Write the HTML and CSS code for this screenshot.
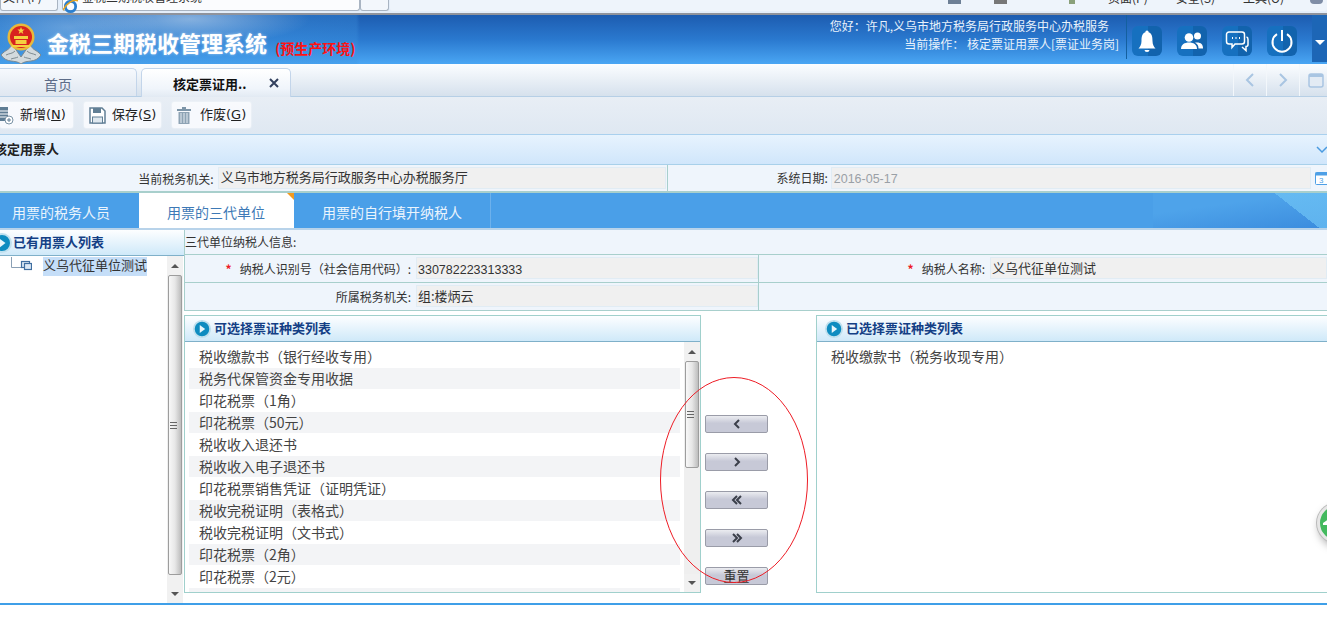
FILE: index.html
```html
<!DOCTYPE html>
<html lang="zh-CN">
<head>
<meta charset="utf-8">
<title>金税三期税收管理系统</title>
<link rel="stylesheet" href="styles.css">
</head>
<body>
<div class="app">
  <div class="chrome">
    <div class="ch-box ch-a"><span class="ch-text">文件(F)</span></div>
    <div class="ch-box ch-b">
      <svg class="ch-ie" width="15" height="15" viewBox="0 0 16 16"><circle cx="8" cy="8" r="5.500" fill="none" stroke="#2a7fd0" stroke-width="3"/><path d="M0 12C4 4 11 0 16 2" fill="none" stroke="#e8a520" stroke-width="1.500"/></svg>
      <span class="ch-text">金税三期税收管理系统</span>
    </div>
    <div class="ch-box ch-c"></div>
    <div class="ch-box ch-d">
      <i class="ch-ico ch-i1"></i><i class="ch-ico ch-i2"></i><i class="ch-ico ch-i3"></i>
      <span class="ch-text ch-m1">页面(P)</span><span class="ch-text ch-m2">安全(S)</span><span class="ch-text ch-m3">工具(O)</span>
      <i class="ch-ico ch-i4"></i>
    </div>
  </div>

  <header class="header">
    <svg class="emblem" width="40" height="42" viewBox="0 0 40 42">
      <path d="M0 33C5 27 8 29 11 22L20 35L29 22C32 29 35 27 40 33C34 42 26 37 20 42C14 37 6 42 0 33Z" fill="#d3dadd" stroke="#7d8a90" stroke-width="1"/>
      <path d="M5 33C9 31 11 32 14 29M35 33C31 31 29 32 26 29M10 37C13 36 15 36 17 35M30 37C27 36 25 36 23 35" fill="none" stroke="#7d8a90"/>
      <circle cx="20" cy="15" r="13.500" fill="#e9b93a"/>
      <circle cx="20" cy="15" r="11" fill="#d8221f"/>
      <path d="M20 5l1 2.600h2.600l-2.100 1.700.8 2.600-2.300-1.600-2.300 1.600.8-2.600-2.100-1.700H19z" fill="#f5d040"/>
      <rect x="13" y="14" width="14" height="3" fill="#f5d040"/>
      <rect x="14.500" y="18" width="11" height="4" fill="#f5d040"/>
      <rect x="11" y="23" width="18" height="2" fill="#f5d040"/>
    </svg>
    <span class="title">金税三期税收管理系统</span>
    <span class="env">(预生产环境)</span>
    <div class="user">
      <div class="user-hello">您好：许凡,义乌市地方税务局行政服务中心办税服务</div>
      <div class="user-op">当前操作： 核定票证用票人[票证业务岗]</div>
    </div>
    <div class="h-icons">
      <span class="h-icon"><svg width="30" height="30" viewBox="0 0 30 30"><path d="M15 4.500a1.600 1.600 0 0 1 1.600 1.800C20 7.500 20.500 11 20.500 15c0 3.500 1.500 6 3 7.500H6.500c1.500-1.500 3-4 3-7.500 0-4 .5-7.500 3.900-8.700A1.600 1.600 0 0 1 15 4.500z" fill="#fff"/><path d="M12.500 24h5a2.500 2 0 0 1-5 0z" fill="#fff"/></svg></span>
      <span class="h-icon"><svg width="30" height="30" viewBox="0 0 30 30"><circle cx="12" cy="11.500" r="4.300" fill="#fff"/><path d="M4 23c0-4.500 3.500-6.500 8-6.500s8 2 8 6.500z" fill="#fff"/><circle cx="20.500" cy="10" r="3.500" fill="#fff"/><path d="M21.500 22.500H26c0-4-2-6-6-6-.8 0-1.300.1-2 .3 2.500 1.200 3.500 3 3.500 5.700z" fill="#fff"/></svg></span>
      <span class="h-icon"><svg width="30" height="30" viewBox="0 0 30 30" fill="none" stroke="#fff" stroke-width="1.500"><path d="M7 6h13a2.500 2.500 0 0 1 2.500 2.500v7A2.500 2.500 0 0 1 20 18h-7l-3 3.500V18H7a2.500 2.500 0 0 1-2.500-2.500v-7A2.500 2.500 0 0 1 7 6z"/><path d="M24.500 11c1.500.3 1.500 1.500 1.500 2.500v5c0 1.500-1 2-2 2v4l-4-3.500" stroke-width="1.500"/><path d="M10 12h1M13.500 12h1M17 12h1" stroke-width="1.800"/></svg></span>
      <span class="h-icon"><svg width="30" height="30" viewBox="0 0 30 30" fill="none" stroke="#fff" stroke-width="2"><path d="M10 8.200a9.500 9.500 0 1 0 10 0"/><path d="M15 4v11"/></svg></span>
    </div>
    <div class="h-more"><i class="caret"></i></div>
  </header>

  <nav class="tabstrip">
    <div class="tab tab-home">首页</div>
    <div class="tab tab-active">
      <span class="tab-name">核定票证用..</span>
      <svg class="tab-x" width="10" height="10" viewBox="0 0 10 10"><path d="M1 1l8 8M9 1L1 9" stroke="#33415e" stroke-width="2"/></svg>
    </div>
    <div class="tab-nav">
      <span class="tab-nav-b"><svg width="10" height="14" viewBox="0 0 10 14"><path d="M8 1L2 7l6 6" fill="none" stroke="#a9c5e2" stroke-width="2"/></svg></span>
      <span class="tab-nav-b"><svg width="10" height="14" viewBox="0 0 10 14"><path d="M2 1l6 6-6 6" fill="none" stroke="#a9c5e2" stroke-width="2"/></svg></span>
      <span class="tab-nav-b tab-nav-last"><svg width="16" height="15" viewBox="0 0 16 15"><rect x="1" y="1" width="14" height="13" rx="2" fill="#e3ebf4" stroke="#a9c5e2" stroke-width="1.500"/><rect x="1" y="1" width="14" height="3" fill="#a9c5e2"/></svg></span>
    </div>
  </nav>

  <div class="toolbar">
    <button class="tool tool-new" type="button">
      <svg width="20" height="20" viewBox="0 0 20 20"><rect x="0" y="2" width="14" height="14" fill="#5f7d94"/><path d="M0 6h14M0 9h14M0 12h14" stroke="#fff"/><circle cx="15" cy="15" r="4" fill="#fff" stroke="#7b93a6"/><path d="M13 15h4M15 13v4" stroke="#5f7d94"/></svg>
      <span class="tool-t">新增(<u>N</u>)</span>
    </button>
    <button class="tool tool-save" type="button">
      <svg width="17" height="17" viewBox="0 0 17 17"><path d="M1 1h12l3 3v12H1z" fill="#fff" stroke="#617f95" stroke-width="1.500"/><rect x="4" y="1" width="8" height="5" fill="#617f95"/><rect x="3.500" y="10" width="10" height="6" fill="#dfe8ef" stroke="#617f95"/></svg>
      <span class="tool-t">保存(<u>S</u>)</span>
    </button>
    <button class="tool tool-del" type="button">
      <svg width="14" height="17" viewBox="0 0 14 17"><rect x="0" y="2" width="14" height="2" fill="#7d95a8"/><rect x="5" y="0" width="4" height="2" fill="#7d95a8"/><path d="M1.500 5h11v12h-11z" fill="#8ea3b4"/><path d="M4 6v10M7 6v10M10 6v10" stroke="#e6edf3"/></svg>
      <span class="tool-t">作废(<u>G</u>)</span>
    </button>
  </div>

  <div class="section">
    <span class="section-t">核定用票人</span>
    <svg class="section-c" width="12" height="8" viewBox="0 0 12 8"><path d="M1 1l5 5 5-5" fill="none" stroke="#4a9be0" stroke-width="1.500"/></svg>
  </div>

  <div class="frow">
    <label class="lab lab-org">当前税务机关:</label>
    <div class="inp inp-org">义乌市地方税务局行政服务中心办税服务厅</div>
    <label class="lab lab-date">系统日期:</label>
    <div class="inp inp-date">2016-05-17</div>
    <svg class="cal" width="12" height="14" viewBox="0 0 12 14"><rect x="0.500" y="1.500" width="14" height="12" rx="1" fill="#fff" stroke="#4d9fe6"/><rect x="0.500" y="1.500" width="14" height="3" fill="#4d9fe6"/><text x="4" y="12" class="cal-t">3</text></svg>
  </div>

  <div class="tabbar">
    <div class="bt bt-1">用票的税务人员</div>
    <div class="bt bt-2 bt-on">用票的三代单位<i class="corner"></i></div>
    <div class="bt bt-3">用票的自行填开纳税人</div>
    <div class="bt-deco"></div>
  </div>

  <main class="main">
    <aside class="side">
      <div class="ph">
        <svg class="ph-ico ph-ico-l" width="22" height="22" viewBox="0 0 22 22"><circle cx="11" cy="11" r="9" fill="#0e8cc0" stroke="#bfe0ee" stroke-width="2"/><path d="M8.500 6.500l6 4.500-6 4.500z" fill="#e8f6fb"/></svg>
        <span class="ph-t">已有用票人列表</span>
      </div>
      <div class="side-body">
        <div class="tree">
          <div class="tree-row">
            <svg class="tree-line" width="32" height="14" viewBox="0 0 32 14"><path d="M11.500 0v10.500H21" fill="none" stroke="#8aa0b5"/><rect x="21.500" y="4.500" width="8" height="6" fill="#dbe8f5" stroke="#3f6ea0" stroke-width="1.200"/><rect x="24.500" y="6.500" width="7" height="6" fill="#dbe8f5" stroke="#3f6ea0" stroke-width="1.200"/></svg>
            <span class="tree-t">义乌代征单位测试</span>
          </div>
        </div>
        <div class="sb sb-side">
          <span class="sb-btn"><i class="tri-up"></i></span>
          <span class="sb-thumb sb-thumb-side"><i class="grip"></i></span>
          <span class="sb-track"></span>
          <span class="sb-btn sb-down"><i class="tri-dn"></i></span>
        </div>
      </div>
    </aside>

    <section class="content">
      <div class="info-title">三代单位纳税人信息:</div>
      <div class="grid">
        <div class="gl"><em class="req">*</em>纳税人识别号（社会信用代码）:</div>
        <div class="gv"><span class="gi gi-num">330782223313333</span></div>
        <div class="gl"><em class="req">*</em>纳税人名称:</div>
        <div class="gv gv-last"><span class="gi">义乌代征单位测试</span></div>
        <div class="gl gl-b">所属税务机关:</div>
        <div class="gv gv-b"><span class="gi">组:楼炳云</span></div>
        <div class="gl gl-b"></div>
        <div class="gv gv-last gv-b gv-empty"></div>
      </div>

      <div class="transfer">
        <div class="panel">
          <div class="ph ph-p">
            <svg class="ph-ico" width="20" height="20" viewBox="0 0 22 22"><circle cx="11" cy="11" r="9" fill="#0e8cc0" stroke="#bfe0ee" stroke-width="2"/><path d="M8.500 6.500l6 4.500-6 4.500z" fill="#e8f6fb"/></svg>
            <span class="ph-t">可选择票证种类列表</span>
          </div>
          <div class="panel-body">
            <ul class="list">
              <li>税收缴款书（银行经收专用）</li>
              <li>税务代保管资金专用收据</li>
              <li>印花税票（1角）</li>
              <li>印花税票（50元）</li>
              <li>税收收入退还书</li>
              <li>税收收入电子退还书</li>
              <li>印花税票销售凭证（证明凭证）</li>
              <li>税收完税证明（表格式）</li>
              <li>税收完税证明（文书式）</li>
              <li>印花税票（2角）</li>
              <li>印花税票（2元）</li>
              <li class="li-cut"></li>
            </ul>
            <div class="sb sb-list">
              <span class="sb-btn"><i class="tri-up"></i></span>
              <span class="sb-thumb sb-thumb-list"><i class="grip"></i></span>
              <span class="sb-track"></span>
              <span class="sb-btn sb-down2"><i class="tri-dn"></i></span>
            </div>
          </div>
        </div>

        <div class="moves">
          <button class="mv" type="button"><svg width="10" height="10" viewBox="0 0 10 10"><path d="M7 1L3 5l4 4" fill="none" stroke="#3b3f4a" stroke-width="2"/></svg></button>
          <button class="mv" type="button"><svg width="10" height="10" viewBox="0 0 10 10"><path d="M3 1l4 4-4 4" fill="none" stroke="#3b3f4a" stroke-width="2"/></svg></button>
          <button class="mv" type="button"><svg width="12" height="10" viewBox="0 0 12 10"><path d="M6 1L2 5l4 4M10 1L6 5l4 4" fill="none" stroke="#3b3f4a" stroke-width="2"/></svg></button>
          <button class="mv" type="button"><svg width="12" height="10" viewBox="0 0 12 10"><path d="M2 1l4 4-4 4M6 1l4 4-4 4" fill="none" stroke="#3b3f4a" stroke-width="2"/></svg></button>
          <button class="mv mv-text" type="button">重置</button>
        </div>

        <div class="panel panel-r">
          <div class="ph ph-p">
            <svg class="ph-ico" width="20" height="20" viewBox="0 0 22 22"><circle cx="11" cy="11" r="9" fill="#0e8cc0" stroke="#bfe0ee" stroke-width="2"/><path d="M8.500 6.500l6 4.500-6 4.500z" fill="#e8f6fb"/></svg>
            <span class="ph-t">已选择票证种类列表</span>
          </div>
          <div class="panel-body">
            <ul class="list list-r"><li>税收缴款书（税务收现专用）</li></ul>
          </div>
        </div>
      </div>
    </section>
  </main>
  <div class="foot"></div>

  <svg class="mark" width="152" height="210" viewBox="0 0 152 210"><ellipse cx="75" cy="104" rx="73.500" ry="102.500" fill="none" stroke="#ee1c25" stroke-width="1"/></svg>
  <div class="float"><svg width="12" height="12" viewBox="0 0 12 12"><path d="M0 6l7-5v3h5v4H0z" fill="#fff"/></svg></div>
</div>
</body>
</html>
```

FILE: styles.css
```css
* { box-sizing: border-box; }
html, body { margin: 0; padding: 0; background: #fff; }
body { font-family: "Noto Sans CJK SC", "Liberation Sans", sans-serif; font-size: 13px; color: #333; overflow: hidden; }
.app { position: relative; width: 1327px; height: 617px; overflow: hidden; display: flex; flex-direction: column; background: #fff; }
button { font-family: inherit; }
ul { list-style: none; margin: 0; padding: 0; }

/* browser chrome */
.chrome { height: 15px; flex: none; display: flex; background: #e4eefa; border-bottom: 2px solid #8f939c; }
.ch-box { height: 11px; background: #f3f7fc; border: 1px solid #a9b4c2; border-top: 0; border-radius: 0 0 3px 3px; display: flex; align-items: flex-end; position: relative; }
.ch-a { width: 58px; overflow: hidden; }
.ch-b { width: 298px; margin-left: 4px; background: #fbfcfe; padding-left: 0; }
.ch-c { width: 29px; }
.ch-d { flex: 1; margin-left: 1px; background: #eef4fb; border: 0; overflow: hidden; }
.ch-text { font-size: 12px; line-height: 14px; height: 14px; color: #333; white-space: nowrap; margin-bottom: 6px; flex: none; }
.ch-a .ch-text { margin-left: 2px; }
.ch-ie { margin: 0 0 -4px 0; flex: none; align-self: flex-end; }
.ch-b .ch-text { margin-left: 4px; }
.ch-ico { width: 13px; height: 4px; background: #6d7f95; flex: none; align-self: flex-start; }
.ch-i1 { margin-left: 558px; }
.ch-i2 { margin-left: 33px; background: #777; }
.ch-i3 { margin-left: 62px; width: 6px; background: #8aa07a; }
.ch-m1 { margin-left: 33px; }
.ch-m2 { margin-left: 28px; }
.ch-m3 { margin-left: 28px; }
.ch-i4 { margin-left: 26px; border-radius: 0 0 7px 7px; background: #7f8da6; }

/* header */
.header {
  height: 49px; flex: none; display: flex; align-items: flex-start; color: #e9f2fb;
  background:
    radial-gradient(ellipse 120px 26px at 190px 4px, rgba(255,255,255,.42), transparent),
    radial-gradient(ellipse 90px 30px at 70px 12px, rgba(255,255,255,.25), transparent),
    linear-gradient(90deg, rgba(64,150,225,.55), rgba(64,150,225,.3) 356px, rgba(64,150,225,0) 360px),
    linear-gradient(180deg, #1d5cb0 0%, #2a79cf 50%, #4aa6f4 100%);
}
.emblem { flex: none; margin: 7px 0 0 1px; }
.title { font-size: 22px; font-weight: 700; line-height: 30px; margin: 12px 0 0 6px; color: #fff; text-shadow: 0 0 3px rgba(255,255,255,.5); white-space: nowrap; }
.env { font-size: 14px; font-weight: 700; color: #ff1212; line-height: 18px; margin: 24px 0 0 8px; white-space: nowrap; }
.user { margin-left: auto; font-size: 12px; line-height: 18px; text-align: right; padding-top: 2px; white-space: nowrap; }
.user-hello { padding-right: 10px; }
.user-op { padding-right: 0; }
.h-icons { width: 186px; height: 44px; margin-left: 7px; border-left: 1px solid #14609f; padding: 11px 0 0 5px; display: flex; gap: 15px; flex: none; }
.h-icon { width: 30px; height: 30px; border-radius: 6px; background: linear-gradient(90deg, #1670bf 55%, #1263ad 55%); display: block; }
.h-icon svg { display: block; }
.h-more { width: 15px; height: 47px; background: #1d66b6; flex: none; display: flex; align-items: center; justify-content: center; padding-top: 8px; }
.caret { width: 0; height: 0; border: 5px solid transparent; border-top: 5px solid #fff; border-bottom: 0; }

/* main tabs */
.tabstrip { height: 33px; flex: none; display: flex; align-items: flex-end; background: linear-gradient(180deg, #fbfdff, #d6e1ed); border-bottom: 1px solid #b6cfe6; position: relative; }
.tab { height: 28px; border: 1px solid #c3d5ea; border-bottom: 0; border-radius: 5px 5px 0 0; display: flex; align-items: center; }
.tab-home { width: 150px; margin-left: -13px; justify-content: center; padding-right: 8px; padding-top: 3px; color: #5c6c88; font-size: 14px; background: linear-gradient(180deg, #f6f9fd, #dfe7f1); }
.tab-active { width: 150px; margin-left: 4px; height: 29px; margin-bottom: -1px; background: linear-gradient(180deg, #fff, #f0f5fb 70%, #e2eaf3); padding: 0 11px 0 31px; justify-content: space-between; position: relative; }
.tab-name { font-size: 13px; font-weight: 700; color: #111; white-space: nowrap; }
.tab-nav { display: flex; height: 32px; margin-left: auto; align-self: flex-end; }
.tab-nav-b { width: 33px; border-left: 1px solid #f3f7fb; display: flex; align-items: center; justify-content: center; }
.tab-nav-last { width: 28px; justify-content: flex-start; padding-left: 8px; }

/* toolbar */
.toolbar { height: 37px; flex: none; display: flex; align-items: flex-start; gap: 11px; padding-top: 5px; background: linear-gradient(180deg, #e8eef5, #dfe8f2); }
.tool { height: 26px; border: 0; padding: 0; background: rgba(250,252,254,.85); box-shadow: 0 0 2px rgba(255,255,255,.9); border-radius: 2px; display: flex; align-items: center; color: #222; white-space: nowrap; }
.tool svg { flex: none; }
.tool-t { font-family: "DejaVu Sans", "Noto Sans CJK SC", sans-serif; font-size: 13px; padding-bottom: 4px; }
.tool-new { width: 73px; }
.tool-new svg { margin-left: -6px; }
.tool-new .tool-t { margin-left: 6px; }
.tool-save { width: 77px; padding-left: 5px; }
.tool-save .tool-t { margin-left: 6px; }
.tool-del { width: 79px; padding-left: 5px; }
.tool-del .tool-t { margin-left: 9px; }

/* section */
.section { height: 31px; flex: none; display: flex; align-items: center; justify-content: space-between; background: linear-gradient(180deg, #e7f3fe, #d0e6fb); border-top: 1px solid #a9d0ee; border-bottom: 1px solid #a8d0ea; }
.section-t { font-size: 13px; font-weight: 700; color: #222; margin-left: -6px; padding-bottom: 2px; white-space: nowrap; }
.section-c { margin-right: -1px; }

/* field row */
.frow { height: 28px; flex: none; display: flex; align-items: center; background: #eff5fc; border-bottom: 2px solid #a8cfcc; color: #333; }
.lab { font-size: 12px; text-align: right; white-space: nowrap; }
.lab-org { width: 214px; }
.inp { height: 22px; background: #f0f0f0; border: 1px solid #e1ecf4; line-height: 18px; white-space: nowrap; padding-left: 2px; }
.inp-org { width: 449px; margin-left: 4px; }
.lab-date { width: 161px; border-left: 1px solid #a8cfcc; height: 26px; line-height: 26px; margin-left: 1px; }
.inp-date { width: 481px; margin-left: 3px; color: #9aa0a6; font-size: 12.500px; line-height: 23px; font-family: "Liberation Sans", sans-serif; }
.cal { margin-left: 4px; flex: none; }
.cal-t { font-size: 8px; fill: #4d9fe6; font-family: "Liberation Sans", sans-serif; }

/* blue tab bar */
.tabbar { height: 37px; flex: none; display: flex; background: #4a9fe8; border-bottom: 2px solid #b8d3ea; }
.bt { height: 35px; line-height: 39px; font-size: 14px; color: #eaf4fd; white-space: nowrap; position: relative; }
.bt-1 { width: 139px; padding-left: 12px; }
.bt-2 { width: 155px; padding-left: 28px; }
.bt-3 { width: 197px; padding-left: 28px; border-right: 1px solid #6db1ec; }
.bt-on { background: #fff; color: #3d79b6; }
.corner { position: absolute; top: 0; right: 0; width: 0; height: 0; border-top: 7px solid #f39a1e; border-left: 7px solid transparent; }
.bt-deco { width: 174px; margin-left: auto; height: 35px; background:
  linear-gradient(38deg, transparent 76%, rgba(110,195,245,.7) 76%),
  linear-gradient(172deg, #4ea3ea 35%, #3b8cde 100%); }

/* main */
.main { height: 373px; flex: none; display: flex; }
.side { width: 184px; flex: none; display: flex; flex-direction: column; }
.ph { height: 26px; flex: none; display: flex; align-items: center; background: linear-gradient(180deg, #fdfeff, #cfe9f9); border-bottom: 1px solid #7fb0c9; }
.ph-t { font-size: 13px; font-weight: 700; color: #143f85; white-space: nowrap; padding-bottom: 2px; }
.ph-ico { flex: none; }
.ph-ico-l { margin-left: -9px; }
.side-body { flex: 1; display: flex; min-height: 0; padding-right: 1px; }
.tree { flex: 1; padding-top: 1px; min-width: 0; }
.tree-row { display: flex; align-items: flex-start; height: 19px; }
.tree-line { flex: none; margin-right: 11px; }
.tree-t { background: #c5def8; font-size: 13px; height: 19px; line-height: 16px; white-space: nowrap; color: #333; width: 104px; }

.sb { width: 16px; flex: none; background: #efefef; display: flex; flex-direction: column; align-items: stretch; }
.sb-btn { height: 19px; flex: none; display: flex; align-items: center; justify-content: center; background: #f1f1f1; }
.sb-thumb { flex: none; margin: 0 1px; border: 1px solid #9d9d9d; border-radius: 2px; background: linear-gradient(90deg, #f8f8f8, #e7e7e7 50%, #bdbdbd); display: flex; align-items: center; justify-content: center; }
.sb-thumb-side { height: 300px; }
.sb-thumb-list { height: 107px; }
.sb-track { flex: 1; }
.sb-down { height: 28px; padding-top: 10px; }
.sb-down2 { height: 18px; }
.grip { width: 7px; height: 7px; border-top: 1px solid #666; border-bottom: 1px solid #666; background: linear-gradient(#666 0 0) center / 100% 1px no-repeat; margin-right: 4px; }
.tri-up { width: 0; height: 0; border: 4px solid transparent; border-bottom: 4px solid #555; border-top: 0; }
.tri-dn { width: 0; height: 0; border: 4px solid transparent; border-top: 4px solid #555; border-bottom: 0; }

/* content */
.content { flex: 1; min-width: 0; }
.info-title { height: 25px; line-height: 24px; font-size: 12px; background: #eff5fc; border-bottom: 1px solid #a8cfcc; border-left: 1px solid #a8cfcc; color: #333; white-space: nowrap; }
.grid { display: grid; grid-template-columns: 231px 343px 231px 1fr; grid-auto-rows: 28px; background: #eff5fc; border-left: 1px solid #a8cfcc; }
.gl { text-align: right; font-size: 12px; line-height: 27px; padding-right: 5px; border-bottom: 1px solid #a8cfcc; white-space: nowrap; color: #333; }
.gv { border-bottom: 1px solid #a8cfcc; border-right: 1px solid #a8cfcc; padding-top: 2px; }
.gv-last { border-right: 0; }
.gi { display: block; height: 22px; background: #f0f0f0; border: 1px solid #e1ecf4; line-height: 19px; padding-left: 1px; white-space: nowrap; font-size: 13px; color: #333; }
.gi-num { font-family: "Liberation Sans", sans-serif; font-size: 12.500px; line-height: 24px; }
.gv-empty { padding: 0; }
.req { color: #ee1c25; font-style: normal; font-weight: 700; margin-right: 8px; }

.transfer { display: grid; grid-template-columns: 517px 115px 1fr; grid-template-rows: 278px; margin-top: 4px; }
.panel { border: 1px solid #a0d0cc; display: flex; flex-direction: column; min-width: 0; min-height: 0; }
.ph-p { padding-left: 7px; gap: 2px; }
.panel-r { border-right: 0; }
.panel-body { flex: 1; display: flex; min-height: 0; background: #fff; }
.list { flex: 1; padding: 4px 4px 0 4px; overflow: hidden; min-width: 0; }
.list li { height: 21px; line-height: 21px; margin-bottom: 1px; padding-left: 10px; font-size: 14px; white-space: nowrap; color: #444; }
.list li:nth-child(even) { background: #f3f4f6; }
.list-r { padding-left: 4px; }

.moves { display: flex; flex-direction: column; align-items: flex-start; gap: 20px; padding: 100px 0 0 4px; }
.mv { width: 63px; height: 18px; padding: 0; border: 1px solid #9a9ca8; border-radius: 2px; background: linear-gradient(180deg, #ebecf0, #c7c9d7 45%, #c7c9d7); display: flex; align-items: center; justify-content: center; color: #333; }
.mv-text { font-size: 13px; line-height: 14px; }

.foot { height: 2px; flex: none; background: #3f9fe8; }

/* overlays */
.mark { position: absolute; left: 659px; top: 376px; pointer-events: none; }
.float { position: absolute; left: 1317px; top: 503px; width: 40px; height: 40px; border-radius: 50%; background: #43b95e; border: 3px solid #e6e6e6; box-shadow: 0 0 0 1px #b9b9b9, 2px 4px 8px rgba(0,0,0,.35); display: flex; align-items: center; padding-left: 3px; }
```
